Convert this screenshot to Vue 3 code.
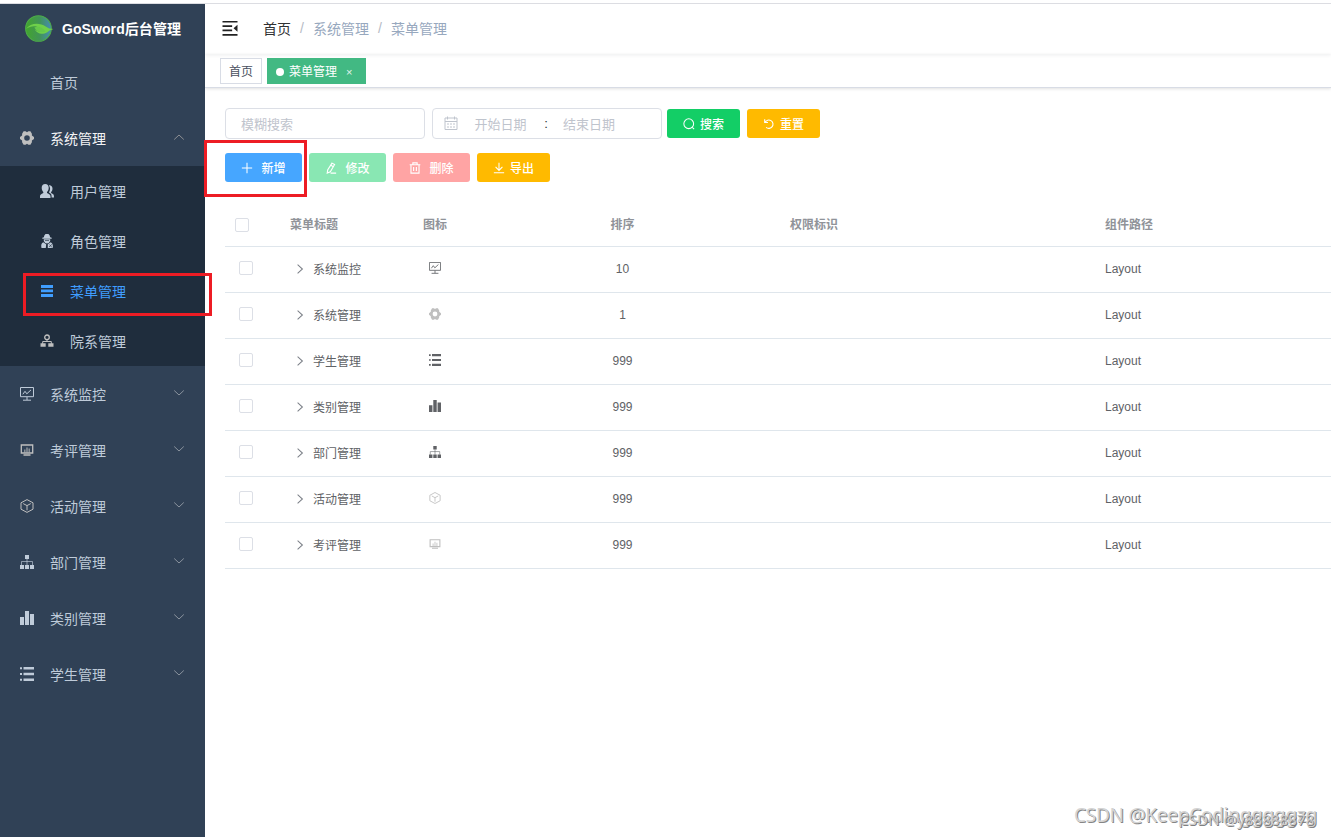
<script setup>
import { h } from 'vue'

const shapes = {
  gear: '<path fill="#bfbfbf" fill-rule="evenodd" d="M3.600 .3h2l1.400.9 1.400-.9h2l1.500 2.500v1.700L14 6v2l-2.100 1.500v1.700l-1.500 2.500h-2L7 12.800l-1.400.9h-2l-1.500-2.500V9.500L0 8V6l2.100-1.500V2.800zM7 4.200a2.800 2.800 0 1 0 0 5.600 2.800 2.800 0 0 0 0-5.600z"/>',
  users: '<path fill="currentColor" d="M5.200 0C3 0 1.700 1.400 1.700 3.700c0 2 .8 3.500 1.600 4.200v1C1.200 9.800 0 10.600 0 12.500V14h10.500v-1.500c0-1.900-1.300-2.800-3.500-3.600v-1c.9-.7 1.700-2.200 1.700-4.200C8.700 1.400 7.400 0 5.200 0z"/><path fill="currentColor" d="M8.800 1.200c2.300-.2 3.700 1.100 3.700 3.200 0 1.600-.7 2.900-1.400 3.600v1c2 .8 2.900 1.700 2.900 3.500v.9h-2.400v-.9c0-2-.8-3.100-2.600-3.900V8.200c1.400-2 1.500-4.800-.2-7z"/>',
  role: '<path fill="currentColor" d="M4.300 1.500 5.500 0h3l1.200 1.500.4 1.700 1.600.6v.9H2.300v-.9l1.600-.6zM3.800 5.300h6.400v1.800L8.800 8.900 7 9.500l-1.800-.6-1.400-1.800zM3.200 8.300 6.200 10.300 5.800 14H1.500c-.6-2.600-.3-4.800 1.700-5.700zM7.800 10.200l3-1.900c1.900.9 2.400 3.100 2 5.700H7.800z"/><path stroke="#1f2d3d" stroke-width=".6" d="M5 6.500h4M9 13l3.300-3M9.500 10.500l2.500 3"/>',
  menu: '<path fill="currentColor" d="M1 1h12v3H1zM1 5.600h12v2.600H1zM1 10h12v3H1z"/>',
  dept: '<g fill="none" stroke="currentColor"><circle cx="7" cy="3.300" r="2.300" stroke-width="1.300"/><path d="M7 5.600v1.900M2.700 10V7.500h8.600V10"/></g><path fill="currentColor" d="M.5 9.200h5.200v3.600H.5zM8.300 9.200h5.200v3.600H8.300z"/>',
  monitor: '<g fill="none" stroke="currentColor"><path d="M.5 .5h13v9.200H.5zM7 10v3M3 13.200h8" /><path d="M2.800 7.300 5 4.300l1.800 2.500L11 2.900"/></g>',
  exam: '<g fill="none" stroke="currentColor"><path stroke-width="1.300" d="M1.300 2h11.400v8H1.300zM3.500 12h7"/><path stroke-width="1.400" opacity=".7" d="M4.800 9.500V6.500M7 9.500V4.500M9.200 9.500V5.500"/></g>',
  box: '<path fill="none" stroke="currentColor" d="m7 .6 6 3.200v6.400l-6 3.200-6-3.200V3.800zM3.200 4.600 7 6.600l3.800-2M7 6.600v4.700"/>',
  tree: '<path fill="currentColor" d="M5 0h4v4H5zM0 10h4v4H0zM5 10h4v4H5zM10 10h4v4h-4z"/><path fill="none" stroke="currentColor" opacity=".65" d="M7 4v6M1.500 10V6.500h11V10"/>',
  bars: '<path fill="currentColor" d="M0 6h4v8H0zM5 0h4v14H5zM10 3h4v11h-4z"/>',
  list: '<path fill="currentColor" d="M0 .3h2v2H0zM0 6h2v2H0zM0 11.700h2v2H0zM3.500 0H14v2.600H3.500zM3.500 5.700H14v2.600H3.500zM3.500 11.400H14V14H3.500z"/>',
  down: '<path fill="none" stroke="currentColor" d="m2.200 4.500 4.800 4.500 4.800-4.500"/>',
  up: '<path fill="none" stroke="currentColor" d="m2.200 9.500 4.800-4.500 4.800 4.500"/>',
  right: '<path fill="none" stroke="currentColor" stroke-width="1.200" d="m4.200 2 5.600 5-5.600 5"/>',
  plus: '<path fill="none" stroke="currentColor" stroke-width="1.200" d="M7 1v12M1 7h12"/>',
  edit: '<path fill="none" stroke="currentColor" stroke-width="1.300" d="m8.200 1.300 3 1.700-5 8.400-3.600 1.500.5-3.500zM6.800 3.800l3 1.700M6.500 13H13"/>',
  trash: '<path fill="none" stroke="currentColor" stroke-width="1.300" d="M.8 3.200h12.400M4.500 3V1h5v2M2.300 3.200V13h9.400V3.200M5.400 5.700v4.800M8.600 5.700v4.800"/>',
  download: '<path fill="none" stroke="currentColor" stroke-width="1.200" d="M7 1v8.500M3 5.800l4 4 4-4M1 12.500h12"/>',
  search: '<path fill="none" stroke="currentColor" stroke-width="1.200" d="M6.700 1a5.700 5.700 0 1 0 0 11.400 5.700 5.700 0 0 0 0-11.400zM10.500 10.700l2.500 2.300"/>',
  reset: '<path fill="none" stroke="currentColor" stroke-width="1.300" d="M2 1.500v3.800h3.800M2.400 5a4.900 4.900 0 1 1 1.200 6"/>',
  calendar: '<path fill="none" stroke="currentColor" d="M1 2h12v11.500H1zM1 5.500h12M3.500 .5v3M10.500 .5v3M3 8h2M6 8h2M9 8h2M3 11h2M6 11h2M9 11h2"/>',
  fold: '<path fill="currentColor" d="M0 0h14v1.500H0zM0 4h9v1.500H0zM0 8h9v1.500H0zM0 12.200h14v1.500H0zM14 3.600v6.400L10.300 6.800z"/>'
}

const Icon = (props) => h('svg', { viewBox: '0 0 14 14', innerHTML: shapes[props.name] })
Icon.props = ['name']

const children = [
  { icon: 'users', title: '用户管理' },
  { icon: 'role', title: '角色管理' },
  { icon: 'menu', title: '菜单管理', active: true },
  { icon: 'dept', title: '院系管理', gray: true }
]
const groups = [
  { icon: 'monitor', title: '系统监控' },
  { icon: 'exam', title: '考评管理', gray: true },
  { icon: 'box', title: '活动管理', gray: true },
  { icon: 'tree', title: '部门管理' },
  { icon: 'bars', title: '类别管理' },
  { icon: 'list', title: '学生管理' }
]
const rows = [
  { icon: 'monitor', title: '系统监控', sort: 10 },
  { icon: 'gear', title: '系统管理', sort: 1 },
  { icon: 'list', title: '学生管理', sort: 999 },
  { icon: 'bars', title: '类别管理', sort: 999 },
  { icon: 'tree', title: '部门管理', sort: 999 },
  { icon: 'box', title: '活动管理', sort: 999, pale: true },
  { icon: 'exam', title: '考评管理', sort: 999, pale: true }
]
</script>

<template>
  <div class="page">
    <aside class="sidebar">
      <div class="logo">
        <svg class="leaf" viewBox="0 0 28 28">
          <defs>
            <linearGradient id="orb"><stop offset="0" stop-color="#42a52d" /><stop offset=".55" stop-color="#419457" /><stop offset="1" stop-color="#468bb5" /></linearGradient>
          </defs>
          <circle cx="13" cy="14" r="12.400" fill="url(#orb)" stroke="#4dac48" />
          <path d="M1 14.500C5 8.500 14 8 20 12q3 2.500 7.500 2.500-4 1-6 3c-5 3-10 1.500-12-2.500 3 2 6 2.500 9 2C15 12.500 8 9.500 1 14.500z" fill="#6fd04a" />
          <path d="M9 13c4-1.500 8 0 11 4-5 1.500-9 0-11-4z" fill="#66c94a" />
        </svg>
        <strong>GoSword后台管理</strong>
      </div>
      <nav>
        <div class="item"><span class="ico"></span><span>首页</span></div>
        <div class="item open"><Icon class="ico" name="gear" /><span>系统管理</span><Icon class="arrow" name="up" /></div>
        <div class="sub">
          <div v-for="c in children" :key="c.title" class="subitem" :class="{ active: c.active }">
            <Icon class="ico" :class="{ gray: c.gray }" :name="c.icon" /><span>{{ c.title }}</span>
          </div>
        </div>
        <div v-for="g in groups" :key="g.title" class="item">
          <Icon class="ico" :class="{ gray: g.gray }" :name="g.icon" /><span>{{ g.title }}</span><Icon class="arrow" name="down" />
        </div>
      </nav>
    </aside>

    <main class="main">
      <header class="navbar">
        <Icon class="fold" name="fold" />
        <div class="crumbs">
          <span class="home">首页</span><i>/</i><span>系统管理</span><i>/</i><span>菜单管理</span>
        </div>
      </header>
      <div class="tags">
        <span class="tag">首页</span>
        <span class="tag on"><b class="dot"></b>菜单管理<em>×</em></span>
      </div>

      <section class="content">
        <div class="filters">
          <div class="input">模糊搜索</div>
          <div class="input range">
            <Icon class="cal" name="calendar" /><span class="date">开始日期</span><span class="sep">:</span><span class="date">结束日期</span>
          </div>
          <button class="btn green"><Icon name="search" />搜索</button>
          <button class="btn amber second"><Icon name="reset" />重置</button>
        </div>
        <div class="actions">
          <button class="btn wide blue"><Icon name="plus" />新增</button>
          <button class="btn wide mint"><Icon name="edit" />修改</button>
          <button class="btn wide pink"><Icon name="trash" />删除</button>
          <button class="btn amber"><Icon name="download" />导出</button>
        </div>

        <div class="table">
          <div class="row head">
            <div class="check"><span class="box"></span></div>
            <div class="label">菜单标题</div>
            <div class="center label">图标</div>
            <div class="center label">排序</div>
            <div class="center label">权限标识</div>
            <div class="path label">组件路径</div>
          </div>
          <div v-for="r in rows" :key="r.title" class="row">
            <div class="check"><span class="box"></span></div>
            <div class="title"><Icon class="expand" name="right" />{{ r.title }}</div>
            <div class="center"><Icon class="cell-icon" :class="{ pale: r.pale }" :name="r.icon" /></div>
            <div class="center">{{ r.sort }}</div>
            <div></div>
            <div class="path">Layout</div>
          </div>
        </div>
      </section>
    </main>

    <div class="mark mark-add"></div>
    <div class="mark mark-menu"></div>
    <div class="watermark large">CSDN @KeepCodingggggzg</div>
    <div class="watermark small">CSDN @y88888878</div>
  </div>
</template>

<style>
html, body { overflow: hidden; background: #fff; }
</style>

<style scoped>
.page {
  position: relative; box-sizing: border-box; width: 1331px; height: 834px; margin-top: 3px; display: flex; overflow: hidden;
  border-top: 1px solid #dcdde2;
  font-family: "Liberation Sans", "Noto Sans CJK SC", sans-serif; font-size: 14px; color: #606266;
}
svg { display: block; flex: none; }
.sidebar { width: 205px; flex: none; background: #304156; color: #bfcbd9; }
.logo { height: 50px; box-sizing: border-box; display: flex; align-items: center; padding: 0 0 2px 25px; color: #fff; font-size: 14px; }
.leaf { width: 29px; height: 29px; margin-right: 8px; }
.logo strong { white-space: nowrap; letter-spacing: .08px; }
.item { height: 56px; box-sizing: border-box; display: flex; align-items: center; padding: 0 19px 0 20px; }
.ico { width: 14px; height: 14px; margin-right: 16px; }
.open { color: #f4f4f5; }
.arrow { width: 14px; height: 14px; margin-left: auto; color: #8a939e; position: relative; top: -1px; }
.open .arrow { color: #8d8f93; }
.sub { background: #1f2d3d; }
.subitem { height: 50px; box-sizing: border-box; display: flex; align-items: center; padding: 0 0 0 40px; }
.active { color: #409eff; }
.gray { color: #bfbfbf; }
.main { flex: 1; min-width: 0; }
.navbar { height: 50px; display: flex; align-items: center; padding-left: 17px; box-shadow: 0 1px 4px rgba(0, 21, 41, .08); }
.fold { width: 16px; height: 15px; color: #222; margin-top: -2px; }
.crumbs { margin: -2px 0 0 25px; color: #97a8be; display: flex; align-items: center; }
.crumbs .home { color: #303133; }
.crumbs i { font-style: normal; width: 22px; text-align: center; color: #b6bbc5; }
.tags { height: 34px; box-sizing: border-box; display: flex; gap: 5px; padding: 4px 15px; border-bottom: 1px solid #d8dce5; box-shadow: 0 1px 3px rgba(0, 0, 0, .12); }
.tag { height: 26px; box-sizing: border-box; border: 1px solid #d8dce5; padding: 1px 8px 0; font-size: 12px; line-height: 24px; color: #495060; display: flex; align-items: center; }
.tag.on { background: #42b983; border-color: #42b983; color: #fff; width: 99px; }
.dot { width: 8px; height: 8px; border-radius: 50%; background: #fff; margin-right: 5px; }
.tag em { font-style: normal; font-size: 11px; margin-left: 9px; opacity: .85; }
.content { padding: 20px 0 0 20px; }
.filters { display: flex; align-items: center; height: 31px; }
.input { width: 200px; height: 31px; box-sizing: border-box; border: 1px solid #dcdfe6; border-radius: 4px; padding: 0 15px 1px; display: flex; align-items: center; font-size: 13px; color: #bfc4cd; }
.range { width: 230px; margin: 0 5px 0 7px; padding: 0 11px 1px; }
.cal { width: 14px; height: 14px; }
.date { margin-left: 16.5px; }
.sep { width: 39px; text-align: center; color: #303133; }
.sep + .date { margin-left: -2.500px; }
.btn { height: 29px; width: 73px; padding: 0; border: 0; border-radius: 3px; color: #fff; font: 500 12px "Liberation Sans", "Noto Sans CJK SC", sans-serif; display: flex; align-items: center; justify-content: center; gap: 5px; }
.btn svg { width: 12px; height: 12px; }
.btn.second { margin-left: 7px; }
.wide { width: 77px; gap: 8px; }
.green { background: #13ce66; }
.amber { background: #ffba00; }
.blue { background: #46a6ff; }
.mint { background: #89e7b3; }
.pink { background: #ffa4a4; }
.actions { display: flex; gap: 7px; margin-top: 14px; }
.table { margin-top: 21px; font-size: 12px; }
.row { display: grid; grid-template-columns: 65px 100px 90px 285px 98px 1fr; height: 46px; box-sizing: border-box; border-bottom: 1px solid #dfe6ec; align-items: center; padding-bottom: 2px; }
.head { height: 44px; padding-bottom: 0; font-weight: 700; color: #909399; }
.label { padding-bottom: 2px; }
.center { display: flex; justify-content: center; }
.check { padding: 0 0 2px 14px; }
.head .check { padding: 0 0 0 10px; }
.box { display: block; width: 14px; height: 14px; box-sizing: border-box; border: 1px solid #dcdfe6; border-radius: 2px; }
.title { display: flex; align-items: center; white-space: nowrap; }
.expand { width: 12px; height: 12px; margin: 0 7px 0 4px; color: #7c8088; }
.cell-icon { width: 12px; height: 12px; position: relative; top: -1px; }
.pale { color: #bfbfbf; }
.path { padding-left: 242px; }
.mark { position: absolute; box-sizing: border-box; border: 3px solid #ed1c24; }
.mark-add { left: 204px; top: 136px; width: 103px; height: 57px; }
.mark-menu { left: 23px; top: 269px; width: 189px; height: 43px; }
.watermark { position: absolute; white-space: nowrap; font-family: "Noto Sans", sans-serif; }
.large { left: 1074px; top: 798px; font-size: 19px; letter-spacing: -.25px; line-height: 26px; color: #d4d4d4; text-shadow: 1px 1px 0 #858585; }
.small { left: 1179px; top: 804px; font-size: 15px; letter-spacing: .1px; line-height: 22px; color: #ccc; text-shadow: 1px 1px 0 #808080; }
</style>
